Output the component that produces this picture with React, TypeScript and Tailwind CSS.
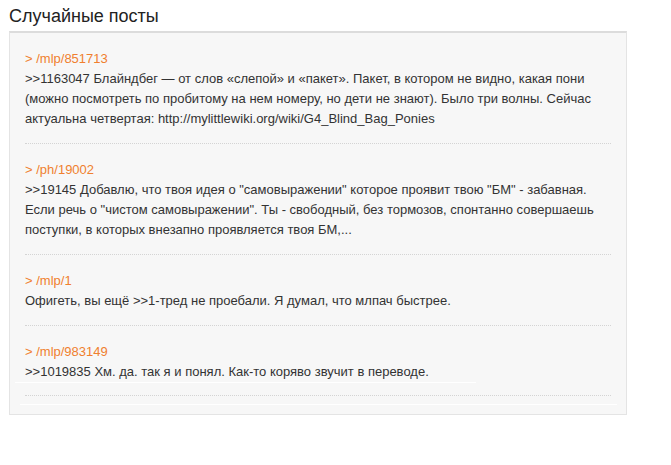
import React from "react";

type Post = { board: string; text: string };

const posts: Post[] = [
  {
    board: "/mlp/851713",
    text: ">>1163047 Блайндбег — от слов «слепой» и «пакет». Пакет, в котором не видно, какая пони (можно посмотреть по пробитому на нем номеру, но дети не знают). Было три волны. Сейчас актуальна четвертая: http://mylittlewiki.org/wiki/G4_Blind_Bag_Ponies",
  },
  {
    board: "/ph/19002",
    text: '>>19145 Добавлю, что твоя идея о "самовыражении" которое проявит твою "БМ" - забавная. Если речь о "чистом самовыражении". Ты - свободный, без тормозов, спонтанно совершаешь поступки, в которых внезапно проявляется твоя БМ,...',
  },
  {
    board: "/mlp/1",
    text: "Офигеть, вы ещё >>1-тред не проебали. Я думал, что млпач быстрее.",
  },
];

function PostItem({ post }: { post: Post }) {
  return (
    <div className="border-b border-dotted border-[#d4d4d4] pt-[16px] pb-[14px]">
      <a className="block text-[#f07f2e] leading-[20px]">&gt; {post.board}</a>
      <p className="text-[#333] leading-[20px]">{post.text}</p>
    </div>
  );
}

export default function App() {
  return (
    <div
      className="w-[671px] h-[465px] bg-white text-[13px]"
      style={{ fontFamily: '"Liberation Sans", Arial, sans-serif' }}
    >
      <h2 className="pl-[9px] pt-[4px] text-[18px] leading-[24px] text-[#222]">
        Случайные посты
      </h2>
      <div className="ml-[9px] mt-[3px] w-[618px] h-[384px] border border-[#e4e4e4] border-t-2 border-t-[#dcdcdc] bg-[#f7f7f7] overflow-hidden">
        <div className="px-[15px]">
          {posts.map((p) => (
            <PostItem key={p.board} post={p} />
          ))}
          <div className="border-b border-dotted border-[#d4d4d4] pt-[16px] pb-[12px]">
            <a className="block text-[#f07f2e] leading-[20px]">&gt; /mlp/983149</a>
            <p className="h-[19px] overflow-hidden text-[#333] leading-[20px]">
              &gt;&gt;1019835 Хм. да. так я и понял. Как-то коряво звучит в переводе.
            </p>
            <div className="ml-[-10px] mt-[1px] h-px w-[461px] bg-white" />
          </div>
          <div className="ml-[-5px] mt-[8px] h-px w-[597px] bg-white" />
        </div>
      </div>
    </div>
  );
}
